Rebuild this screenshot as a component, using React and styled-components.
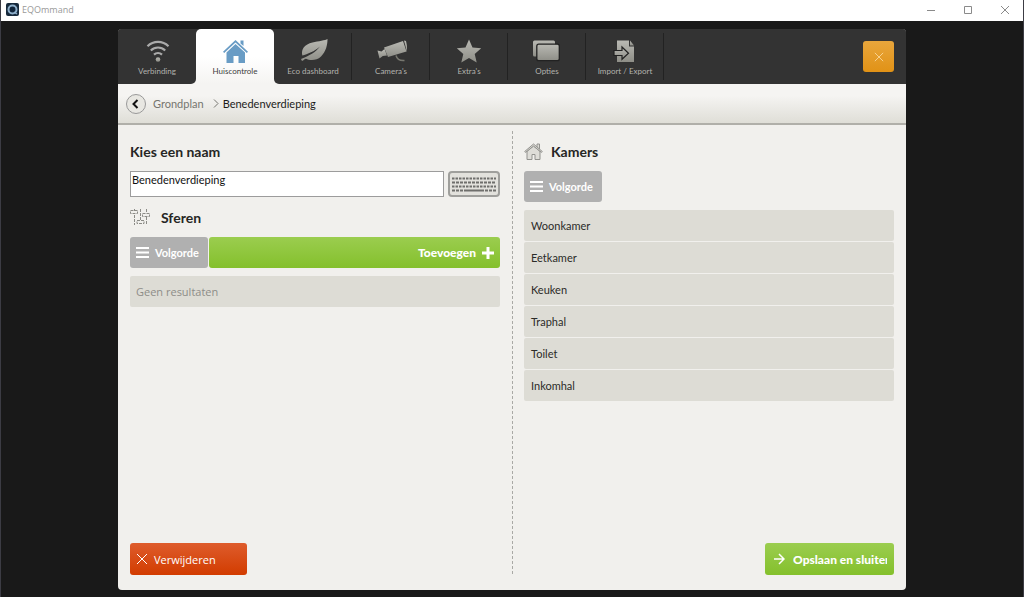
import React, { useState } from "react";
import styled, { createGlobalStyle, css } from "styled-components";

const Global = createGlobalStyle`
  * { box-sizing: border-box; }
  body { margin: 0; background: #191919; color: #2b2b28; font-family: Lato, "Open Sans", sans-serif; font-size: 11px; }
  button, input { font: inherit; margin: 0; }
  button { cursor: pointer; }
  h2, ul, ol { margin: 0; padding: 0; list-style: none; }
  svg { display: block; flex: none; }
`;

const green = "linear-gradient(#9bcd4f, #84c02c)";
const red = "linear-gradient(#de5c2c, #d23c00)";
const grey = "#b0b0b0";
const humanist = css`font-family: "Open Sans", "Noto Sans", sans-serif;`;

const Window = styled.div`
  min-height: 100vh;
  display: flex;
  flex-direction: column;
  border: 1px solid #3c3c44;
  border-width: 0 1px;
`;
const TitleBar = styled.header`
  ${humanist}
  height: 21px;
  display: flex;
  align-items: center;
  gap: 3px;
  padding: 0 0 2px 5px;
  background: #fff;
  color: #999;
  font-size: 9px;
`;
const WindowControls = styled.div`
  margin-left: auto;
  display: flex;
`;
const WindowButton = styled.button`
  width: 37px;
  height: 18px;
  display: grid;
  place-items: center;
  padding: 0;
  border: 0;
  background: none;
  color: #8a8a8a;
`;
const Stage = styled.div`
  flex: 1;
  display: flex;
  padding: 8px 117px 7px;
`;
const Panel = styled.div`
  flex: 1;
  min-width: 0;
  display: flex;
  flex-direction: column;
  border-radius: 4px;
  overflow: hidden;
  background: #f1f0ed;
`;
const TabBar = styled.nav`
  height: 55px;
  display: flex;
  background: linear-gradient(#333 50%, #f5f4f2 50%);
`;
const Tab = styled.button`
  width: 78px;
  display: flex;
  flex-direction: column;
  align-items: center;
  gap: 1px;
  padding: 9px 0 0;
  border: 0;
  background: #333;
  color: #b2b2ad;
  font-size: 8px;
  line-height: 12px;
  white-space: nowrap;
  ${(p) => p.$divided && css`
    background: linear-gradient(#222, #222) right 4px / 1px 47px no-repeat #333;
  `}
  ${(p) => p.$corner === "right" && css`border-bottom-right-radius: 5px;`}
  ${(p) => p.$corner === "left" && css`border-bottom-left-radius: 5px;`}
  ${(p) => p.$active && css`
    background: linear-gradient(#fff 50%, #f5f4f2);
    color: #3c3c3c;
    border-radius: 5px 5px 0 0;
  `}
`;
const TabEnd = styled.div`
  flex: 1;
  display: flex;
  align-items: center;
  justify-content: flex-end;
  padding-right: 12px;
  background: #333;
`;
const CloseButton = styled.button`
  width: 31px;
  height: 31px;
  display: grid;
  place-items: center;
  padding: 0;
  border: 0;
  border-radius: 3px;
  background: linear-gradient(#e8a63c, #e19216);
  color: #fbdca2;
`;
const Crumbs = styled.nav`
  height: 41px;
  display: flex;
  align-items: center;
  padding: 0 8px;
  border-bottom: 2px solid #b0afa9;
  background: linear-gradient(#f5f4f2 30%, #dfded7);
`;
const BackButton = styled.button`
  width: 20px;
  height: 20px;
  display: grid;
  place-items: center;
  margin-right: 7px;
  padding: 0;
  border: 1px solid #999;
  border-radius: 50%;
  background: #e8e7e2;
  color: #111;
`;
const CrumbLink = styled.a`
  margin-right: 9px;
  color: #75756f;
  text-decoration: none;
`;
const CrumbHere = styled.span`
  margin-left: 4px;
  color: #1c1c1a;
`;
const Columns = styled.main`
  flex: 1;
  display: grid;
  grid-template-columns: 1fr 2px 1fr;
  gap: 11px;
  padding: 6px 12px 15px;
`;
const Divider = styled.div`
  background: repeating-linear-gradient(#a9a9a5 0 3px, transparent 3px 5px) right / 1px 100% no-repeat;
`;
const Column = styled.section`
  min-width: 0;
  display: flex;
  flex-direction: column;
  padding-top: 9px;
`;
const Heading = styled.h2`
  height: 24px;
  display: flex;
  align-items: center;
  gap: ${(p) => p.$gap || 6}px;
  margin-bottom: 7px;
  padding-bottom: 2px;
  color: #262624;
  font-size: 14px;
  font-weight: 700;
`;
const NameRow = styled.div`
  display: flex;
  gap: 4px;
  margin-bottom: 9px;
`;
const NameInput = styled.input`
  flex: 1;
  min-width: 0;
  height: 26px;
  padding: 0 1px 10px;
  border: 1px solid #9c9c9c;
  border-radius: 0;
  background: #fff;
  color: #111;
  outline: 0;
`;
const KeyboardButton = styled.button`
  width: 52px;
  height: 26px;
  display: grid;
  place-items: center;
  padding: 0;
  border: 2px solid #9f9f9c;
  border-radius: 4px;
  background: #e2e1dc;
  color: #6f6f6c;
`;
const ButtonRow = styled.div`
  display: flex;
  gap: 1px;
  margin-bottom: 8px;
`;
const Button = styled.button`
  height: ${(p) => p.$height || 31}px;
  display: flex;
  align-items: center;
  gap: 6px;
  padding: 0 6px;
  border: 0;
  border-radius: 3px;
  background: ${(p) => p.$fill};
  color: #fff;
  white-space: nowrap;
  ${(p) => p.$bold && css`
    font-size: 12px;
    font-weight: 900;
  `}
`;
const AddButton = styled(Button)`
  flex: 1;
  justify-content: flex-end;
`;
const OrderButton = styled(Button)`
  width: 78px;
  font-weight: 700;
`;
const DeleteButton = styled(Button)`
  ${humanist}
  width: 117px;
`;
const SaveButton = styled(Button)`
  width: 129px;
  gap: 8px;
  padding: 0 7px 0 8px;
`;
const Clip = styled.span`
  min-width: 0;
  overflow: hidden;
`;
const List = styled.ul`
  display: flex;
  flex-direction: column;
  gap: 1px;
`;
const Row = styled.li`
  height: 31px;
  display: flex;
  align-items: center;
  padding: 0 7px;
  border-radius: 2px;
  background: #dddcd5;
`;
const EmptyRow = styled(Row)`
  ${humanist}
  padding: 0 6px;
  color: #8d8d88;
`;
const Footer = styled.div`
  display: flex;
  justify-content: ${(p) => (p.$end ? "flex-end" : "flex-start")};
  margin-top: auto;
`;

const Stroke = ({ d, size = 12, w = 1, box = 12 }) => (
  <svg width={size} height={size} viewBox={`0 0 ${box} ${box}`} fill="none" stroke="currentColor" strokeWidth={w} aria-hidden="true">
    <path d={d} />
  </svg>
);
const TabIcon = ({ id, children }) => (
  <svg width="32" height="26" viewBox="0 0 32 26" aria-hidden="true">
    <defs>
      <linearGradient id={`metal-${id}`} x1="0" y1="0" x2="0" y2="1">
        <stop offset="0" stopColor="#b9b9b3" />
        <stop offset="1" stopColor="#8e8e87" />
      </linearGradient>
    </defs>
    <g fill={`url(#metal-${id})`}>{children}</g>
  </svg>
);

const tabs = [
  { id: "verbinding", label: "Verbinding", art: (
    <>
      <circle cx="17" cy="21.500" r="2.300" />
      <g fill="none" stroke="#aaa" strokeWidth="2.200">
        <path d="M6.500 8.300C12.500 2.500 21.500 2.500 27.500 8.300" />
        <path d="M9.800 12.500C14 8.500 20 8.500 24.200 12.500" />
        <path d="M13 16.600C15.300 14.500 18.700 14.500 21 16.600" />
      </g>
    </>
  ) },
  { id: "huis", label: "Huiscontrole", art: (
    <g fill="#699cc5">
      <path d="M21.500 2.500h3v5.500l-3-2.500z" />
      <path d="M16.500 2L29 13.700l-1.200 1.300L16.500 4.500 5.200 15 4 13.700z" />
      <path d="M16.500 6L26 14.500V25H19.500v-7h-5v7H7.500V14.500z" />
    </g>
  ) },
  { id: "eco", label: "Eco dashboard", art: (
    <path d="M30.500 1C28.500 2.500 21.500 3 15.500 4.500C7.500 6.500 4 11 5.300 17.500C10.500 16 17.500 13.500 23 8.500C18.500 14.500 12.500 17.500 4 21L5 23C6.500 22.500 7.500 21 9 20.800C12.500 22.500 19.500 23 24 18.500C29 13.500 30.500 7 30.500 1Z" />
  ) },
  { id: "camera", label: "Camera's", art: (
    <>
      <path d="M9 9.500L28 3l3.500 10.500-18.500 5.500z" />
      <path d="M29 2.500l2 .5 2 9.500-1 1.500z" />
      <path d="M2.500 12.500l4 1 3-2.500 2.500 6.500-4.200.5L4.500 20.500z" />
      <path d="M21 17.500c1 3.500 3 5.500 8.500 5" fill="none" stroke="#77776f" strokeWidth="1.500" />
    </>
  ) },
  { id: "extra", label: "Extra's", art: (
    <path d="M16 1.500l3.500 8 8.700.8-6.500 5.700 2 8.500-7.700-4.500-7.700 4.500 2-8.500-6.500-5.700 8.700-.8z" />
  ) },
  { id: "opties", label: "Opties", art: (
    <>
      <rect x="2" y="2.500" width="22" height="16" rx="1.500" />
      <rect x="5.800" y="6.200" width="22.500" height="16.500" rx="2" stroke="#222" strokeWidth="1.300" />
    </>
  ) },
  { id: "import", label: "Import / Export", art: (
    <>
      <path d="M8 2.500h12v6h5V24H8z" />
      <path d="M21 2.500l4 5h-4z" />
      <path d="M5 12.500h8V9l6.500 6.300-6.500 6v-3.800H5z" stroke="#222" strokeWidth="1.200" />
    </>
  ) },
];

const Bars = () => (
  <svg width="13" height="13" viewBox="0 0 13 13" fill="currentColor" aria-hidden="true">
    <path d="M0 1h13v2H0zM0 5.500h13v2H0zM0 10h13v2H0z" />
  </svg>
);
const KeyboardArt = () => (
  <svg width="46" height="18" viewBox="0 0 46 18" stroke="currentColor" fill="none" strokeWidth="2" aria-hidden="true">
    <path d="M1 3.500h44M1 11.500h44" strokeDasharray="2.500 1" />
    <path d="M1 7.500h44" strokeDasharray="3 1" />
    <path d="M1 15.500h11M34 15.500h11" strokeDasharray="3 1" />
    <path d="M13 15.500h20" />
  </svg>
);
const SlidersArt = () => (
  <svg width="21" height="16" viewBox="0 0 21 16" fill="none" stroke="#8b8b86" aria-hidden="true">
    <path d="M4.500 0v2M4.500 6v10M10.500 0v11M16.500 0v4M16.500 8v8" strokeDasharray="3 1" />
    <path d="M.5 1.500h7v3h-7zM7 11.500h7v3H7zM12.500 4.500h7v3h-7z" strokeDasharray="3 1" />
  </svg>
);
const HouseArt = () => (
  <svg width="19" height="17" viewBox="0 0 19 17" fill="#deddd8" stroke="#92928e" aria-hidden="true">
    <path d="M13 4V1h2.500v5" />
    <path d="M3 8.500V16.500h5V11.500h3v5H16V8.500L9.500 3z" />
    <path d="M.7 8.500L9.500 1l8.800 7.500-.8.900L9.500 3 1.500 9.400z" />
  </svg>
);
const LogoArt = () => (
  <svg width="13" height="13" viewBox="0 0 13 13" aria-hidden="true">
    <rect width="13" height="13" rx="2" fill="#16293c" />
    <circle cx="6.500" cy="6.500" r="4" fill="#10243a" stroke="#8fb0cc" strokeWidth="2" />
    <path d="M8 9l3 2" stroke="#8fb0cc" strokeWidth="1.500" />
  </svg>
);

const rooms = ["Woonkamer", "Eetkamer", "Keuken", "Traphal", "Toilet", "Inkomhal"];

export default function App() {
  const [active, setActive] = useState(1);
  const [name, setName] = useState("Benedenverdieping");
  return (
    <Window>
      <Global />
      <TitleBar>
        <LogoArt />
        EQOmmand
        <WindowControls>
          <WindowButton aria-label="Minimaliseren"><Stroke d="M2 6.500h8" /></WindowButton>
          <WindowButton aria-label="Maximaliseren"><Stroke d="M2.500 2.500h7v7h-7z" /></WindowButton>
          <WindowButton aria-label="Venster sluiten"><Stroke d="M2 2l8 8M10 2l-8 8" /></WindowButton>
        </WindowControls>
      </TitleBar>
      <Stage>
        <Panel>
          <TabBar>
            {tabs.map((t, i) => (
              <Tab
                key={t.id}
                $active={i === active}
                $divided={i !== active && i !== active - 1}
                $corner={i === active - 1 ? "right" : i === active + 1 ? "left" : undefined}
                onClick={() => setActive(i)}
              >
                <TabIcon id={t.id}>{t.art}</TabIcon>
                {t.label}
              </Tab>
            ))}
            <TabEnd>
              <CloseButton aria-label="Sluiten"><Stroke size={10} d="M1 1l10 10M11 1L1 11" /></CloseButton>
            </TabEnd>
          </TabBar>
          <Crumbs>
            <BackButton aria-label="Terug"><Stroke size={10} box={10} w={2} d="M6.500 1L2.500 5l4 4" /></BackButton>
            <CrumbLink href="#grondplan">Grondplan</CrumbLink>
            <svg width="6" height="9" viewBox="0 0 6 9" fill="none" stroke="#75756f" aria-hidden="true">
              <path d="M1 .5l4 4-4 4" />
            </svg>
            <CrumbHere>Benedenverdieping</CrumbHere>
          </Crumbs>
          <Columns>
            <Column>
              <Heading as="label" htmlFor="naam">Kies een naam</Heading>
              <NameRow>
                <NameInput id="naam" value={name} onChange={(e) => setName(e.target.value)} />
                <KeyboardButton aria-label="Toetsenbord"><KeyboardArt /></KeyboardButton>
              </NameRow>
              <Heading $gap={10}><SlidersArt />Sferen</Heading>
              <ButtonRow>
                <OrderButton $fill={grey}><Bars />Volgorde</OrderButton>
                <AddButton $fill={green} $bold>
                  Toevoegen<Stroke w={3} d="M6 0v12M0 6h12" />
                </AddButton>
              </ButtonRow>
              <List><EmptyRow>Geen resultaten</EmptyRow></List>
              <Footer>
                <DeleteButton $fill={red} $height={32}><Stroke d="M1 1l10 10M11 1L1 11" />Verwijderen</DeleteButton>
              </Footer>
            </Column>
            <Divider />
            <Column>
              <Heading $gap={8}><HouseArt />Kamers</Heading>
              <ButtonRow>
                <OrderButton $fill={grey}><Bars />Volgorde</OrderButton>
              </ButtonRow>
              <List>{rooms.map((r) => <Row key={r}>{r}</Row>)}</List>
              <Footer $end>
                <SaveButton $fill={green} $height={32} $bold>
                  <Stroke w={1.5} d="M1 6h10M6 1l5 5-5 5" />
                  <Clip>Opslaan en sluiten</Clip>
                </SaveButton>
              </Footer>
            </Column>
          </Columns>
        </Panel>
      </Stage>
    </Window>
  );
}
